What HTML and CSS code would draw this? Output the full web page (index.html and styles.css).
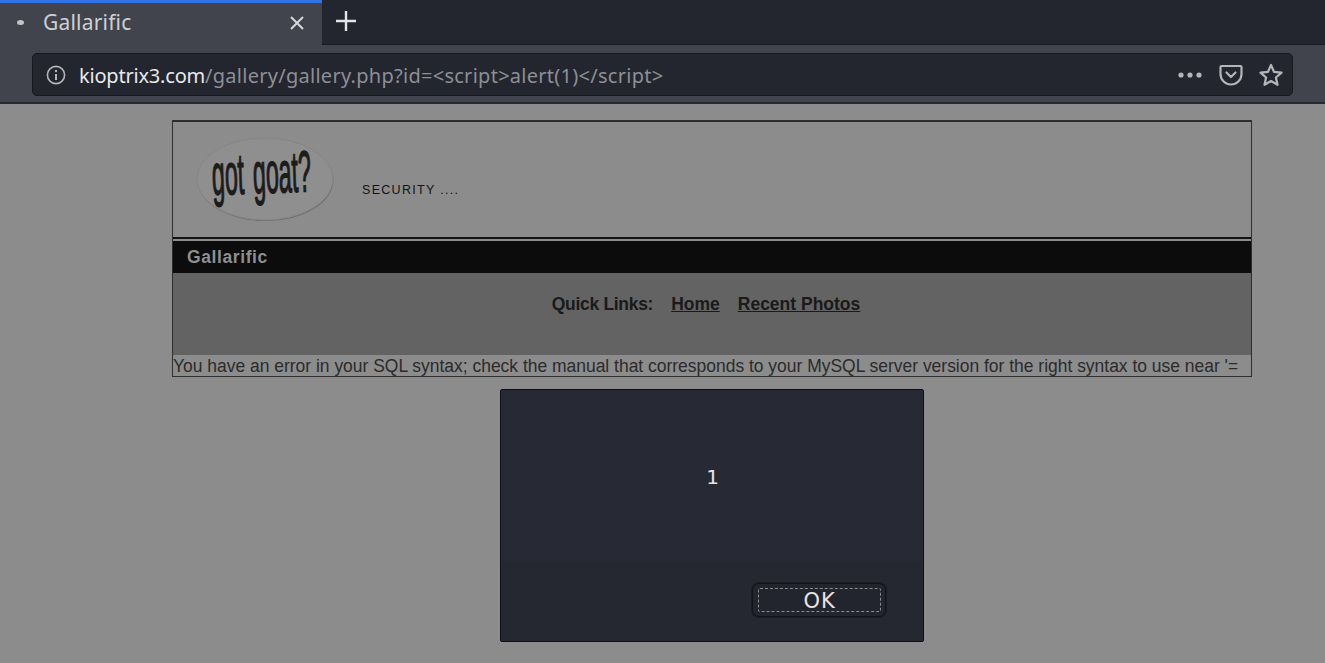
FILE: index.html
```html
<!DOCTYPE html>
<html lang="en">
<head>
<meta charset="utf-8">
<title>Gallarific</title>
<link rel="stylesheet" href="styles.css">
</head>
<body>
<div class="chrome">
  <div class="tabstrip">
    <div class="tab">
      <span class="favicon"></span>
      <span class="tab-title">Gallarific</span>
      <svg class="tab-close" width="16" height="16" viewBox="0 0 16 16"><path d="M2 2 14 14M14 2 2 14" stroke="#d6d7da" stroke-width="2" fill="none"/></svg>
    </div>
    <svg class="newtab" width="22" height="22" viewBox="0 0 22 22"><path d="M11 1V21M1 11H21" stroke="#e4e5e7" stroke-width="2.4" fill="none"/></svg>
  </div>
  <div class="toolbar">
    <div class="urlbar">
      <svg class="info" width="20" height="20" viewBox="0 0 20 20"><circle cx="10" cy="10" r="8.6" stroke="#b4b5b9" stroke-width="1.6" fill="none"/><path d="M10 9V15" stroke="#b4b5b9" stroke-width="2"/><circle cx="10" cy="6" r="1.2" fill="#b4b5b9"/></svg>
      <div class="url"><span class="host">kioptrix3.com</span>/gallery/gallery.php?id=&lt;script&gt;alert(1)&lt;/script&gt;</div>
      <div class="actions">
        <svg width="24" height="6" viewBox="0 0 24 6"><circle cx="3" cy="3" r="2.6" fill="#b4b5b9"/><circle cx="12" cy="3" r="2.6" fill="#b4b5b9"/><circle cx="21" cy="3" r="2.6" fill="#b4b5b9"/></svg>
        <svg class="pocket" width="24" height="22" viewBox="0 0 24 22"><path d="M2.5 2H21.5Q22.5 2 22.5 3V10C22.5 16 17.5 20.5 12 20.5S1.500 16 1.500 10V3Q1.500 2 2.500 2Z M7.500 8.500 12 13 16.500 8.500" stroke="#b4b5b9" stroke-width="2.200" fill="none" stroke-linecap="round" stroke-linejoin="round"/></svg>
        <svg width="24" height="24" viewBox="0 0 24 24"><path d="M12 2 15 8.800 22.500 9.600 16.900 14.500 18.500 21.800 12 18 5.500 21.800 7.100 14.500 1.500 9.600 9 8.800Z" stroke="#b4b5b9" stroke-width="2.200" fill="none" stroke-linejoin="round"/></svg>
      </div>
    </div>
  </div>
</div>
<main class="page">
  <section class="site">
    <header class="site-head">
      <svg class="logo" width="140" height="88" viewBox="0 0 140 88">
        <ellipse cx="69.500" cy="44" rx="68" ry="41" fill="#6a6a6a"/>
        <ellipse cx="69" cy="43" rx="68" ry="41" fill="#8f8f8f" stroke="#858585" stroke-width="1"/>
        <text class="logo-text" transform="rotate(-2 70 43) translate(16 57) scale(0.4 1)">got goat?</text>
      </svg>
      <span class="slogan">SECURITY ....</span>
    </header>
    <div class="site-title">Gallarific</div>
    <nav class="quick">
      <b class="quick-label">Quick Links:</b>
      <a href="#">Home</a>
      <a href="#">Recent Photos</a>
    </nav>
    <div class="sql-error">You have an error in your SQL syntax; check the manual that corresponds to your MySQL server version for the right syntax to use near '=</div>
  </section>
  <div class="dialog">
    <div class="dialog-body">1</div>
    <div class="dialog-foot">
      <button class="ok"><span class="ok-inner">OK</span></button>
    </div>
  </div>
</main>
</body>
</html>
```
FILE: styles.css
```css
* { box-sizing: border-box; }
html, body { margin: 0; height: 100%; overflow: hidden; }
body { background: #8c8c8c; font-family: "Liberation Sans", Arial, sans-serif; width: 1325px; height: 663px; }

.chrome { height: 104px; border-bottom: 2px solid #27292e; background: #41444c; }
.tabstrip { height: 45px; background: #23262f; border-bottom: 1px solid #1a1c23; display: flex; align-items: stretch; }
.tab { width: 322px; height: 45px; background: #41444c; border-top: 3px solid #2f73e6; display: flex; align-items: center; padding: 0 16px 3px 17px; margin-right: 12px; }
.favicon { width: 7px; height: 5px; border-radius: 50%; background: #c4c5c9; margin-right: 19px; flex: none; }
.tab-title { font: 21px "Noto Sans", sans-serif; letter-spacing: 0.2px; color: #cfd0d3; flex: 1; margin-top: -2px; }
.tab-close { flex: none; margin-right: 1px; margin-top: 1px; }
.newtab { align-self: center; margin: 0 0 3px 1px; }

.toolbar { height: 57px; padding: 8px 32px 6px; }
.urlbar { height: 43px; width: 1261px; background: #23262f; border: 1px solid #17181d; border-radius: 5px; display: flex; align-items: center; padding: 0 9px 0 13px; }
.info { flex: none; margin-right: 13px; }
.url { flex: 1; font: 20px "Noto Sans", sans-serif; color: #8d8f95; letter-spacing: 0.27px; white-space: nowrap; padding-top: 1px; }
.host { color: #e8e9eb; letter-spacing: -0.2px; }
.actions { display: flex; align-items: center; gap: 17px; }
.pocket { margin-right: -1px; }

.page { padding-top: 16px; }
.site { width: 1080px; height: 257px; margin-left: 172px; border-style: solid; border-color: #2e2e2e; border-width: 2px 1px 1px 1px; display: flex; flex-direction: column; background: #8c8c8c; }
.site-head { height: 117px; border-bottom: 2px solid #141414; display: flex; align-items: flex-start; padding: 14px 0 0 23px; }
.logo { flex: none; overflow: visible; }
.logo-text { font: 400 58px "Liberation Sans", sans-serif; word-spacing: 6px; fill: #1c1c1c; stroke: #1c1c1c; stroke-width: 1.400px; }
.slogan { font-size: 12.500px; color: #141414; letter-spacing: 1.300px; margin: 47px 0 0 26px; }
.site-title { margin-top: 2px; height: 32px; background: #0c0c0c; color: #8f8f8f; font-weight: 700; font-size: 17.500px; letter-spacing: 0.600px; line-height: 32px; padding-left: 14px; }
.quick { height: 82px; background: #636363; color: #1a1a1a; font-size: 17.500px; padding: 20px 12px 0 0; line-height: 22px; display: flex; justify-content: center; gap: 18px; }
.quick-label { font-weight: 700; letter-spacing: -0.300px; }
.quick a { color: #1a1a1a; font-weight: 700; text-decoration: underline; }
.sql-error { height: 21px; color: #2b2b2b; font-size: 17.470px; line-height: 22px; white-space: nowrap; }

.dialog { width: 424px; height: 253px; margin: 12px 0 0 500px; background: #272a34; border: 1px solid #0e0f13; border-radius: 2px; display: flex; flex-direction: column; }
.dialog-body { height: 172px; color: #e6e6e6; font: 20px "DejaVu Sans", sans-serif; text-align: center; padding: 75px 0 0 1px; }
.dialog-foot { flex: 1; background: #252830; padding: 21px 37px 0 0; display: flex; justify-content: flex-end; align-items: flex-start; }
.ok { width: 134px; height: 34px; padding: 4px 4px 4px 5px; background: #23252e; border: 1px solid #11121a; border-radius: 7px; box-shadow: 0 0 0 1px #1b1d25; }
.ok-inner { display: block; height: 24px; border: 1px dashed #8a8b92; border-radius: 2px; color: #e4e4e4; font: 21px/24px "DejaVu Sans", sans-serif; letter-spacing: 0.800px; text-align: center; }
```
